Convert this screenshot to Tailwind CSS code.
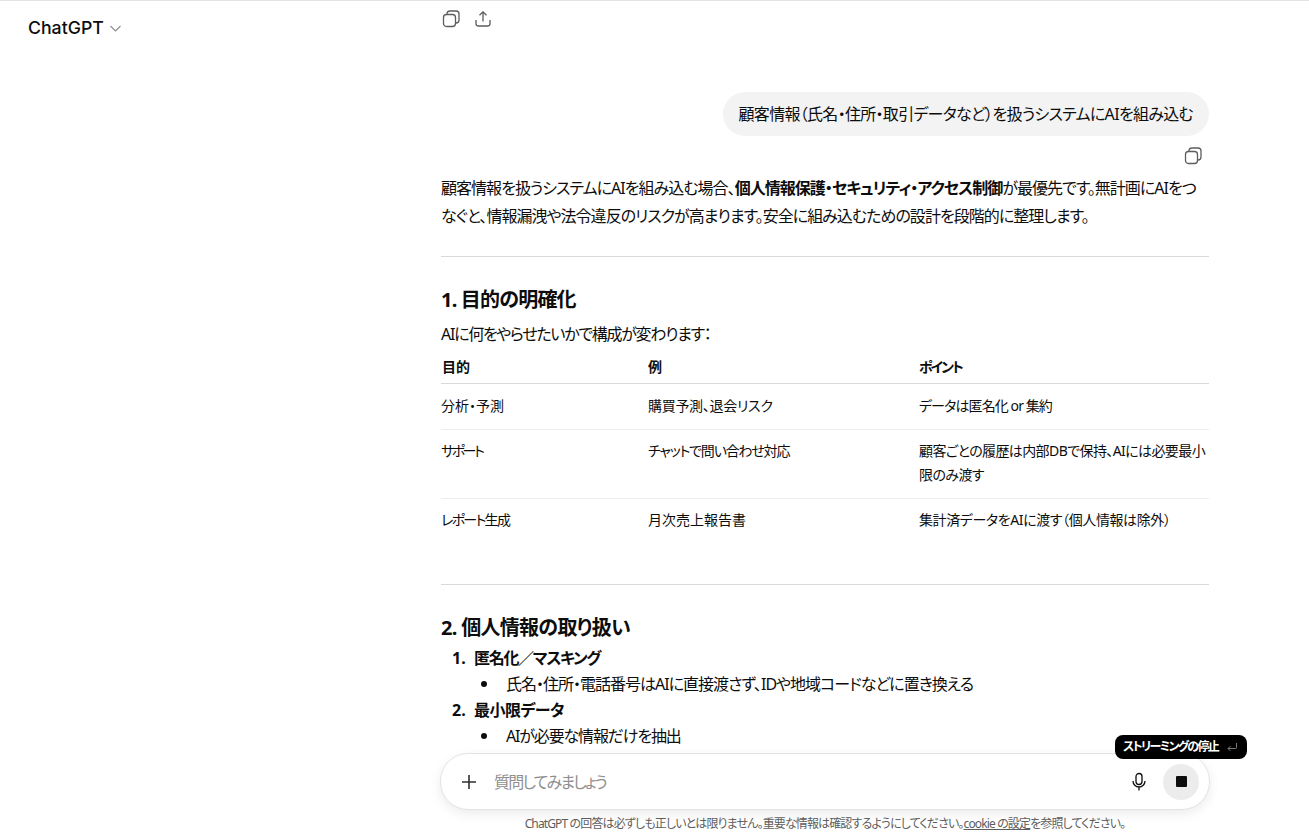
<!DOCTYPE html>
<html lang="ja">
<head>
    <meta charset="utf-8"/>
    <meta content="width=device-width, initial-scale=1.0" name="viewport"/>
    <title>ChatGPT</title>
    <script src="https://cdn.jsdelivr.net/npm/@tailwindcss/browser@4"></script>
</head>
<body class="bg-white text-[#0d0d0d] font-['Noto_Sans','Noto_Sans_CJK_JP',sans-serif] [font-feature-settings:'palt']">
    <div class="relative h-[832px] overflow-hidden border-t border-[#e3e3e3]">
        <!-- Model switcher -->
        <div class="absolute left-[28px] top-[16px] flex items-center gap-[5px]">
            <span class="font-['Inter',sans-serif] text-[17.7px] leading-[22px] font-medium">ChatGPT</span>
            <svg class="w-[13px] h-[13px] text-[#8f8f8f]" viewBox="0 0 13 13" fill="none" stroke="currentColor" stroke-width="1.2"><path d="M1.500 4l5 5 5-5"/></svg>
        </div>

        <!-- Conversation -->
        <div class="w-[768px] ml-[441px]">
            <!-- previous message actions -->
            <div class="flex gap-[14px] h-[36px] pt-[9px] pl-px text-[#5d5d5d]">
                <svg class="w-[18px] h-[18px]" viewBox="0 0 18 18" fill="none" stroke="currentColor" stroke-width="1.3"><rect x="1.500" y="4.500" width="12" height="12" rx="3"/><path d="M5 4.500V4a3 3 0 0 1 3-3h6a3 3 0 0 1 3 3v6a3 3 0 0 1-3 3h-.5"/></svg>
                <svg class="w-[18px] h-[18px]" viewBox="0 0 18 18" fill="none" stroke="currentColor" stroke-width="1.3"><path d="M9 11.500V2M5.500 5.200L9 1.800l3.500 3.400M2 10v3.500A2.500 2.500 0 0 0 4.500 16h9a2.500 2.500 0 0 0 2.500-2.500V10"/></svg>
            </div>

            <!-- user message -->
            <div class="flex justify-end mt-[55px]">
                <div class="bg-[#f3f3f3] rounded-[22px] h-[44px] px-4 flex items-center text-[16px] tracking-[-0.7px] whitespace-nowrap">顧客情報（氏名・住所・取引データなど）を扱うシステムにAIを組み込む</div>
            </div>
            <div class="flex justify-end h-[40px] pt-[11px] text-[#5d5d5d]">
                <svg class="w-[18px] h-[18px] mr-[7px]" viewBox="0 0 18 18" fill="none" stroke="currentColor" stroke-width="1.3"><rect x="1.500" y="4.500" width="12" height="12" rx="3"/><path d="M5 4.500V4a3 3 0 0 1 3-3h6a3 3 0 0 1 3 3v6a3 3 0 0 1-3 3h-.5"/></svg>
            </div>

            <!-- answer -->
            <p class="text-[16px] leading-[28px] -mt-[2px] tracking-[-0.97px] whitespace-nowrap">顧客情報を扱うシステムにAIを組み込む場合、<strong class="font-bold">個人情報保護・セキュリティ・アクセス制御</strong>が最優先です。無計画にAIをつ<br/>なぐと、情報漏洩や法令違反のリスクが高まります。安全に組み込むための設計を段階的に整理します。</p>
            <hr class="border-[#d9d9d9] mt-[26px]"/>

            <h3 class="text-[20px] leading-[28px] font-bold mt-[29px] tracking-[-0.8px]">1. 目的の明確化</h3>
            <p class="text-[16px] leading-[28px] mt-[6px] tracking-[-1.3px]">AIに何をやらせたいかで構成が変わります：</p>

            <table class="w-full text-[14px] mt-[2px] table-fixed">
                <thead>
                    <tr class="border-b border-[#d9d9d9]">
                        <th class="w-[207px] text-left font-bold h-[33px] pl-px">目的</th>
                        <th class="w-[271px] text-left font-bold">例</th>
                        <th class="text-left font-bold tracking-[-2px]">ポイント</th>
                    </tr>
                </thead>
                <tbody>
                    <tr class="border-b border-[#ededed]">
                        <td class="h-[46px] pb-[2px]">分析・予測</td>
                        <td class="pb-[2px] tracking-[-0.3px]">購買予測、退会リスク</td>
                        <td class="pb-[2px] tracking-[-0.9px]">データは匿名化 or 集約</td>
                    </tr>
                    <tr class="border-b border-[#ededed]">
                        <td class="h-[69px] align-top pt-[10px] tracking-[-2.5px]">サポート</td>
                        <td class="align-top pt-[10px] tracking-[-1.2px]">チャットで問い合わせ対応</td>
                        <td class="align-top pt-[9px] leading-[24px] tracking-[-0.6px] whitespace-nowrap">顧客ごとの履歴は内部DBで保持、AIには必要最小<br/>限のみ渡す</td>
                    </tr>
                    <tr>
                        <td class="h-[45px] pb-[2px] tracking-[-1.7px]">レポート生成</td>
                        <td class="pb-[2px]">月次売上報告書</td>
                        <td class="pb-[2px] tracking-[-0.4px]">集計済データをAIに渡す（個人情報は除外）</td>
                    </tr>
                </tbody>
            </table>
            <hr class="border-[#d9d9d9] mt-[41px]"/>

            <h3 class="text-[20px] leading-[28px] font-bold mt-[29px] tracking-[-0.7px]">2. 個人情報の取り扱い</h3>
            <div class="text-[16px] leading-[26px] mt-[3px]">
                <div class="flex font-bold"><span class="w-[33px] pl-[11px]">1.</span><span class="tracking-[-1.3px]">匿名化／マスキング</span></div>
                <div class="flex items-center"><span class="w-[6px] h-[6px] rounded-full bg-[#0d0d0d] ml-[40px] mr-[19px]"></span><span class="tracking-[-1px]">氏名・住所・電話番号はAIに直接渡さず、IDや地域コードなどに置き換える</span></div>
                <div class="flex font-bold"><span class="w-[33px] pl-[11px]">2.</span><span class="tracking-[-0.5px]">最小限データ</span></div>
                <div class="flex items-center"><span class="w-[6px] h-[6px] rounded-full bg-[#0d0d0d] ml-[40px] mr-[19px]"></span><span class="tracking-[-1.15px]">AIが必要な情報だけを抽出</span></div>
            </div>
        </div>

        <!-- Composer overlay -->
        <div class="absolute left-0 right-0 bottom-0 h-[90px] bg-gradient-to-b from-white/0 to-white to-[16%]">
            <div class="absolute left-[440px] top-[11px] w-[770px] h-[57px] bg-white rounded-[28px] border border-[#e3e3e3] shadow-[0_4px_12px_rgba(0,0,0,0.08)] flex items-center pl-[19px] pr-[10px]">
                <svg class="w-[18px] h-[18px] text-[#303030]" viewBox="0 0 18 18" fill="none" stroke="currentColor" stroke-width="1.6"><path d="M9 2v14M2 9h14"/></svg>
                <span class="ml-[16px] text-[16px] text-[#8f8f8f] flex-1 tracking-[-1.8px]">質問してみましょう</span>
                <svg class="w-[18px] h-[20px] mr-[15px] text-[#0d0d0d]" viewBox="0 0 18 20" fill="none" stroke="currentColor" stroke-width="1.300"><rect x="6" y="1.500" width="6" height="11" rx="3"/><path d="M3 9a6 6 0 0 0 12 0M9 15v3.500"/></svg>
                <div class="w-[36px] h-[36px] rounded-full bg-[#ececec] flex items-center justify-center">
                    <div class="w-[11px] h-[11px] bg-[#0d0d0d] rounded-[1px]"></div>
                </div>
            </div>
            <p class="absolute left-0 right-0 top-[74px] ml-[441px] w-[768px] text-center text-[12px] leading-[16px] text-[#5d5d5d] whitespace-nowrap tracking-[-0.87px]">ChatGPT の回答は必ずしも正しいとは限りません。重要な情報は確認するようにしてください。<span class="underline">cookie の設定</span>を参照してください。</p>
        </div>

        <!-- Tooltip -->
        <div class="absolute left-[1115px] top-[734px] w-[132px] h-[24px] bg-black rounded-[8px] flex items-center pl-[8px] text-white text-[12px] font-bold whitespace-nowrap">
            <span class="w-[96px] tracking-[-1.7px]">ストリーミングの停止</span>
            <svg class="w-[12px] h-[12px] ml-[7px] text-[#7a7a7a]" viewBox="0 0 12 12" fill="none" stroke="currentColor" stroke-width="1"><path d="M10.500 2v4.500a1 1 0 0 1-1 1H2M4.500 5L2 7.500 4.500 10"/></svg>
        </div>
    </div>
</body>
</html>
